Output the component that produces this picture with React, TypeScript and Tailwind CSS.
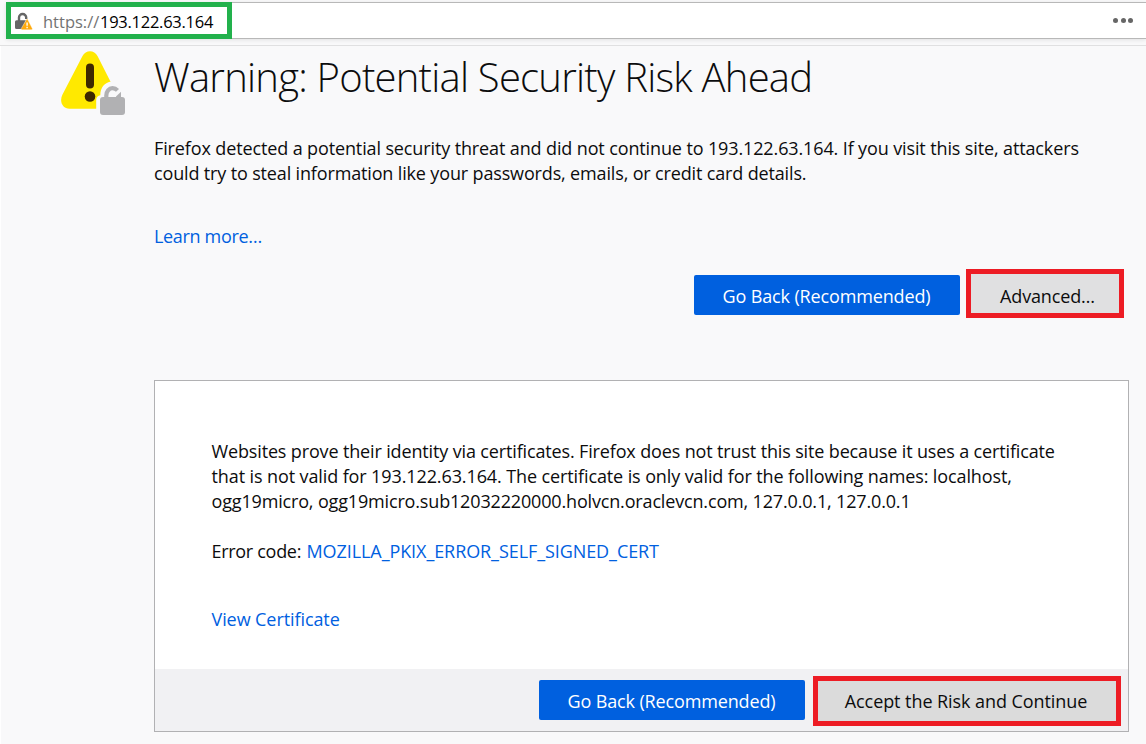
import type { ReactNode } from "react";

function InsecureLockIcon() {
  return (
    <svg className="block shrink-0" width="20" height="20" viewBox="0 0 20 20">
      <path d="M5 10V6.600a3.600 3.600 0 0 1 7.200 0V8" fill="none" stroke="#666" strokeWidth="2.400" />
      <path d="M2.500 9.200H12L8 18H2.500A1.500 1.500 0 0 1 1 16.500V10.700A1.500 1.500 0 0 1 2.500 9.200Z" fill="#666" />
      <path
        d="M12.600 8.300 7.300 17.400A.9.9 0 0 0 8.100 18.800H17.500A.9.9 0 0 0 18.300 17.400L13.600 8.300A.6.6 0 0 0 12.600 8.300Z"
        fill="#ffaa0d"
        stroke="#fff"
        strokeWidth=".4"
      />
      <path d="M13.100 11.400V14.700M13.100 15.800V17.200" stroke="#fff" strokeWidth="1.400" />
    </svg>
  );
}

function WarningIcon() {
  return (
    <svg className="block shrink-0" width="66" height="66" viewBox="0 0 66 66">
      <path
        d="M21.500 5C24.600-1.400 33.400-1.400 36.500 5L56 43.500C59.500 50.500 56 57.700 50.500 57.700H8.500C1.500 57.700-2 50.500 1.500 43.500Z"
        fill="#ffe900"
      />
      <path d="M29 16.500V33.500" stroke="#3e2800" strokeWidth="8" strokeLinecap="round" />
      <circle cx="29" cy="45.500" r="5.300" fill="#3e2800" />
      <path
        d="M35.200 66V49C35.200 46.500 37 44.800 39.300 44.300C39.300 36.500 43.500 31.500 50.500 30.500C58 30.500 62 36 63 41L66 48V66Z"
        fill="#f9f9fa"
      />
      <path
        d="M45.300 49V44.500C45.300 40.500 48 37.200 51.500 37.200C53.700 37.200 55.200 38 56.500 39.400"
        fill="none"
        stroke="#b1b1b3"
        strokeWidth="4.200"
      />
      <path d="M55 45.500 60 40.800V47H55Z" fill="#b1b1b3" />
      <rect x="39" y="46" width="25" height="18" rx="3" fill="#b1b1b3" />
    </svg>
  );
}

function GoBackButton() {
  return (
    <button className="h-10 w-[266px] rounded-[2px] bg-[#0060df] pt-[2px] pr-px text-[18px] tracking-[-0.14px] text-white">
      Go Back (Recommended)
    </button>
  );
}

function Line({ className, children }: { className: string; children: ReactNode }) {
  return <div className={`whitespace-nowrap ${className}`}>{children}</div>;
}

export default function App() {
  return (
    <div className="flex h-[744px] w-[1146px] flex-col overflow-hidden bg-[#f9f9fa] font-['Open_Sans',sans-serif] text-[18px] leading-[25px] text-[#0c0c0d]">
      <header className="h-[46px] shrink-0 border-b border-[#e0e0e1] pt-[2px] pl-[6px]">
        <div className="flex h-[37px] items-center justify-between border-y border-[#b8b8b8] bg-white shadow-[0_1px_4px_rgba(0,0,0,0.1)]">
          <div className="flex h-[37px] w-[226px] shrink-0 items-center border-[5px] border-[#22b14c] pl-[3px]">
            <InsecureLockIcon />
            <div className="ml-[9px] flex pt-px text-[16.500px] whitespace-nowrap">
              <span className="w-[57px] text-[#737373]">https://</span>
              <span className="tracking-[-0.260px] text-black">193.122.63.164</span>
            </div>
          </div>
          <div className="mr-[13px] flex gap-[2.500px]">
            <i className="size-[5px] rounded-full bg-[#666]" />
            <i className="size-[5px] rounded-full bg-[#666]" />
            <i className="size-[5px] rounded-full bg-[#666]" />
          </div>
        </div>
      </header>

      <main className="flex min-h-0 grow border-l border-white">
        <div className="w-[153px] shrink-0 pt-[5px] pl-[60px]">
          <WarningIcon />
        </div>
        <div className="w-[975px] shrink-0">
          <h1 className="h-[90px] pt-[4px] text-[40px] leading-[54px] font-light tracking-[-0.760px] whitespace-nowrap">
            Warning: Potential Security Risk Ahead
          </h1>
          <Line className="tracking-[-0.125px]">
            Firefox detected a potential security threat and did not continue to 193.122.63.164. If you visit this site, attackers
          </Line>
          <Line className="tracking-[-0.150px]">
            could try to steal information like your passwords, emails, or credit card details.
          </Line>
          <a className="mt-[38px] block tracking-[-0.330px] text-[#0060df]">Learn more…</a>

          <div className="mt-[20px] flex h-[49px] justify-end pr-[5px]">
            <div className="mr-[6px] pt-[6px]">
              <GoBackButton />
            </div>
            <button className="w-[158px] border-[5px] border-[#ed1c24] bg-[#e0e0e1] pt-[6px] pl-[5px] tracking-[-0.146px]">
              Advanced…
            </button>
          </div>

          <section className="mt-[62px] flex h-[352px] flex-col border border-[#b1b1b3] bg-white">
            <div className="grow pt-[58px] pl-[56.500px]">
              <Line className="tracking-[-0.145px]">
                Websites prove their identity via certificates. Firefox does not trust this site because it uses a certificate
              </Line>
              <Line className="tracking-[-0.108px]">
                that is not valid for 193.122.63.164. The certificate is only valid for the following names: localhost,
              </Line>
              <Line className="tracking-[-0.160px]">
                ogg19micro, ogg19micro.sub12032220000.holvcn.oraclevcn.com, 127.0.0.1, 127.0.0.1
              </Line>
              <div className="mt-[25px] flex whitespace-nowrap">
                <span className="w-[95px] tracking-[-0.300px]">Error code:</span>
                <a className="tracking-[-0.080px] text-[#0060df]">MOZILLA_PKIX_ERROR_SELF_SIGNED_CERT</a>
              </div>
              <a className="mt-[43px] block tracking-[-0.080px] text-[#0060df]">View Certificate</a>
            </div>
            <div className="flex h-[62px] shrink-0 justify-end bg-[#f1f1f3] pt-[7px] pr-[7px]">
              <div className="mr-[8px] pt-[4px]">
                <GoBackButton />
              </div>
              <button className="h-[50px] w-[308px] border-[5px] border-[#ed1c24] bg-[#dbdbdb] pr-[2px] tracking-[-0.070px]">
                Accept the Risk and Continue
              </button>
            </div>
          </section>
        </div>
      </main>
    </div>
  );
}
